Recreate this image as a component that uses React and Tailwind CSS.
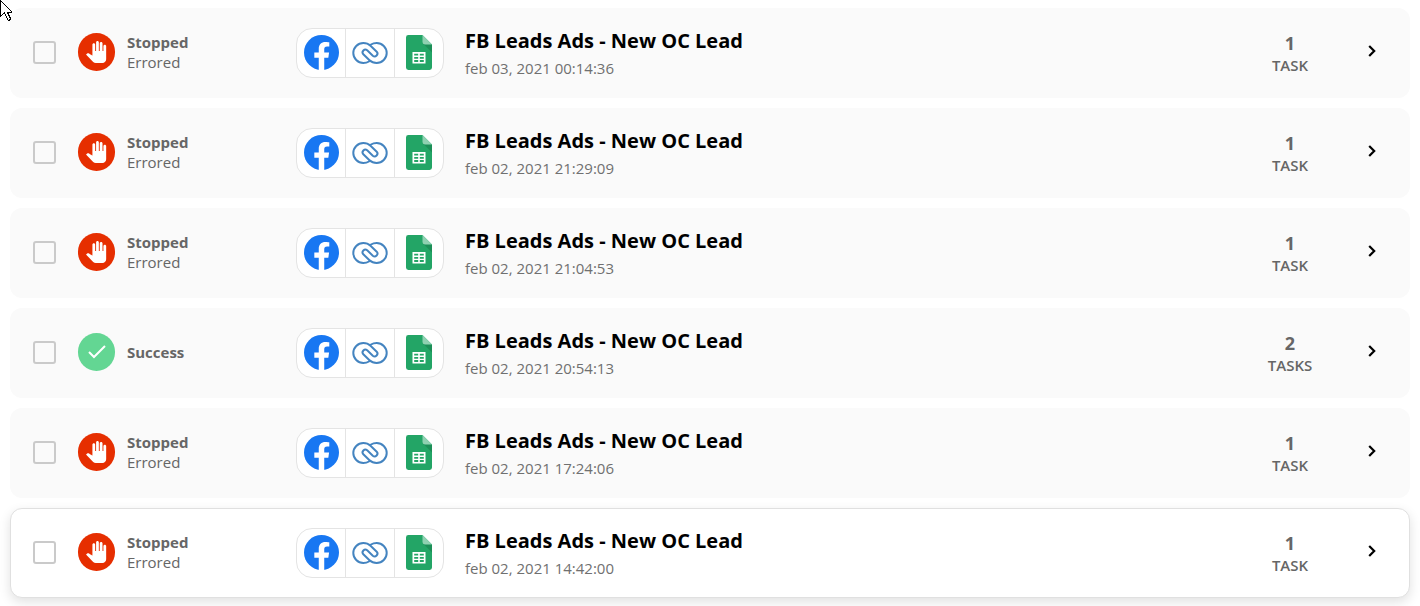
import React, { useState } from 'react';
import { Check } from 'lucide-react';

const RUNS = [
  { id: 1, status: 'stopped', title: 'FB Leads Ads - New OC Lead', date: 'feb 03, 2021 00:14:36', tasks: 1 },
  { id: 2, status: 'stopped', title: 'FB Leads Ads - New OC Lead', date: 'feb 02, 2021 21:29:09', tasks: 1 },
  { id: 3, status: 'stopped', title: 'FB Leads Ads - New OC Lead', date: 'feb 02, 2021 21:04:53', tasks: 1 },
  { id: 4, status: 'success', title: 'FB Leads Ads - New OC Lead', date: 'feb 02, 2021 20:54:13', tasks: 2 },
  { id: 5, status: 'stopped', title: 'FB Leads Ads - New OC Lead', date: 'feb 02, 2021 17:24:06', tasks: 1 },
  { id: 6, status: 'stopped', title: 'FB Leads Ads - New OC Lead', date: 'feb 02, 2021 14:42:00', tasks: 1 },
];

function HandIcon() {
  return (
    <svg viewBox="1 0 24 24" className="w-[22px] h-[22px]" fill="currentColor" aria-hidden="true">
      <path d="M23 5.5V20c0 2.2-1.8 4-4 4h-7.3c-1.08 0-2.1-.43-2.85-1.19L1 14.83s1.26-1.23 1.3-1.25c.22-.19.49-.29.79-.29.22 0 .42.06.6.16.04.01 4.31 2.46 4.31 2.46V4c0-.83.67-1.5 1.5-1.5S11 3.17 11 4v7h1V1.5c0-.83.67-1.5 1.5-1.5S15 .67 15 1.5V11h1V2.5c0-.83.67-1.5 1.5-1.5s1.5.67 1.5 1.5V11h1V5.5c0-.83.67-1.5 1.5-1.5s1.5.67 1.5 1.5z" />
    </svg>
  );
}

function FacebookLogo() {
  return (
    <svg viewBox="0 0 24 24" className="w-[35px] h-[35px]" role="img" aria-label="Facebook">
      <circle cx="12" cy="12" r="12" fill="#1877f2" />
      <path
        fill="#fff"
        d="M10.125 24v-8.437H7.078v-3.49h3.047V9.43c0-3.007 1.792-4.669 4.533-4.669 1.312 0 2.686.235 2.686.235v2.953H15.83c-1.491 0-1.956.925-1.956 1.874v2.25h3.328l-.532 3.49h-2.796V24z"
      />
    </svg>
  );
}

function LinkLogo() {
  return (
    <svg viewBox="0 0 36 24" className="w-9 h-6" role="img" aria-label="CRM" fill="none" stroke="#4484c0" strokeWidth="2" strokeLinecap="round">
      <path d="M17 20.500C15.400 21.500 13.500 22 11.300 22A10 10 0 0 1 11.300 2c3 0 5.400 1 7.200 2.700L24.700 10.700A2.800 2.800 0 0 1 20.800 14.700L15.200 9.300A2.800 2.800 0 0 0 11.300 13.300L17.500 19.300c1.800 1.700 4.200 2.700 7.200 2.700A10 10 0 0 0 24.700 2C22.500 2 20.600 2.500 19 3.500" />
    </svg>
  );
}

function SheetsLogo() {
  return (
    <svg viewBox="0 0 26 35" className="w-[26px] h-[35px]" role="img" aria-label="Google Sheets">
      <path fill="#23a566" d="M2.400 0H16.500L26 9.500V32.600A2.400 2.400 0 0 1 23.600 35H2.400A2.400 2.400 0 0 1 0 32.600V2.400A2.400 2.400 0 0 1 2.400 0z" />
      <path fill="#1c8f57" d="M17.200 8.800 26 17.500V9.500z" />
      <path fill="#8ed1b1" d="M16.500 0 26 9.500h-7.100a2.400 2.400 0 0 1-2.400-2.400z" />
      <path
        fill="#fff"
        fillRule="evenodd"
        d="M6.500 17h13v11.500h-13zM8.200 18.700v1.900h4v-1.900zM13.800 18.700v1.900h4v-1.900zM8.200 21.900v1.800h4v-1.800zM13.800 21.900v1.800h4v-1.800zM8.200 25v1.900h4V25zM13.800 25v1.900h4V25z"
      />
    </svg>
  );
}

function Pointer() {
  return (
    <svg viewBox="0 0 12 21" className="absolute top-0 left-0 w-3 h-[21px] pointer-events-none" shapeRendering="crispEdges" aria-hidden="true">
      <path d="M.5 -.5V16.500L4.500 12.500L7.500 19.500L8.500 20.500L10.500 19.500L10.500 18.500L7.500 12.500H11.500V11.500L0 0" fill="#fff" stroke="#000" />
    </svg>
  );
}

function StatusBadge({ status }) {
  if (status === 'success') {
    return (
      <span className="w-[37px] h-[38px] rounded-full bg-[#63d693] text-white flex items-center justify-center shrink-0">
        <Check className="w-6 h-6" strokeWidth={2} strokeLinecap="butt" strokeLinejoin="miter" />
      </span>
    );
  }
  return (
    <span className="w-[37px] h-[38px] rounded-full bg-[#e62e00] text-white flex items-center justify-center shrink-0">
      <HandIcon />
    </span>
  );
}

function RunRow({ run, active, checked, onToggle }) {
  return (
    <li
      className={
        active
          ? 'flex items-center h-[90px] pl-[22px] pr-[25px] pb-px rounded-xl border border-[#e0e0e0] bg-white shadow-[0_4px_12px_rgba(0,0,0,0.12)]'
          : 'flex items-center h-[90px] pl-[22px] pr-[25px] pb-px rounded-xl border border-transparent bg-[#fafafa]'
      }
    >
      <input
        type="checkbox"
        checked={checked}
        onChange={onToggle}
        aria-label={`Select run from ${run.date}`}
        className="appearance-none w-[23px] h-[23px] shrink-0 rounded-[3px] border-2 border-[#cacaca] checked:bg-[#cacaca]"
      />

      <div className="flex items-center gap-3 w-[218px] ml-[22px] pb-px shrink-0">
        <StatusBadge status={run.status} />
        <div className="text-[15px] leading-5 text-[#666]">
          <p className="font-bold">{run.status === 'success' ? 'Success' : 'Stopped'}</p>
          {run.status === 'stopped' && <p>Errored</p>}
        </div>
      </div>

      <div className="flex h-[50px] w-[148px] shrink-0 rounded-2xl border border-[#e4e4e4] bg-white divide-x divide-[#e4e4e4]">
        <div className="flex-1 flex items-center justify-center"><FacebookLogo /></div>
        <div className="flex-1 flex items-center justify-center"><LinkLogo /></div>
        <div className="flex-1 flex items-center justify-center"><SheetsLogo /></div>
      </div>

      <div className="flex-1 min-w-0 ml-[21px] pt-[3px]">
        <h2 className="text-xl leading-7 font-bold text-black truncate">{run.title}</h2>
        <p className="text-[15px] leading-[26px] text-[#707070]">{run.date}</p>
      </div>

      <div className="w-20 pt-[3px] text-center text-[#666] shrink-0">
        <p className="text-lg leading-[22px] font-bold">{run.tasks}</p>
        <p className="text-[15px] leading-[22px] font-semibold">{run.tasks === 1 ? 'TASK' : 'TASKS'}</p>
      </div>

      <button type="button" aria-label="Open run" className="ml-[30px] pb-[3px] flex items-center justify-center w-6 h-6 shrink-0 text-black">
        <svg viewBox="0 0 8 12" className="w-2 h-3" fill="none" stroke="currentColor" strokeWidth="2.2" aria-hidden="true">
          <path d="M1.200 1 6.200 6 1.200 11" />
        </svg>
      </button>
    </li>
  );
}

export default function App() {
  const [selected, setSelected] = useState([]);

  const toggle = (id) => {
    setSelected((prev) => (prev.includes(id) ? prev.filter((x) => x !== id) : [...prev, id]));
  };

  return (
    <main className="relative bg-white px-2.5 py-2 font-['Open_Sans',sans-serif]">
      <ul className="flex flex-col gap-2.5">
        {RUNS.map((run) => (
          <RunRow
            key={run.id}
            run={run}
            active={run.id === 6}
            checked={selected.includes(run.id)}
            onToggle={() => toggle(run.id)}
          />
        ))}
      </ul>
      <Pointer />
    </main>
  );
}
